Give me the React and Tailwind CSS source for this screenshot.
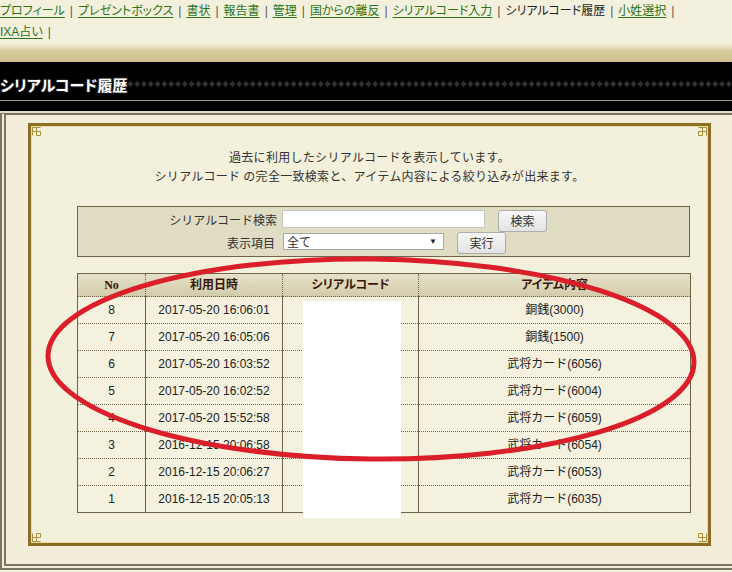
import React from "react";

const navItems = [
  { t: "プロフィール", link: true },
  { t: "プレゼントボックス", link: true },
  { t: "書状", link: true },
  { t: "報告書", link: true },
  { t: "管理", link: true },
  { t: "国からの離反", link: true },
  { t: "シリアルコード入力", link: true },
  { t: "シリアルコード履歴", link: false },
  { t: "小姓選択", link: true },
  { t: "IXA占い", link: true },
];

const rows = [
  ["8", "2017-05-20 16:06:01", "銅銭(3000)"],
  ["7", "2017-05-20 16:05:06", "銅銭(1500)"],
  ["6", "2017-05-20 16:03:52", "武将カード(6056)"],
  ["5", "2017-05-20 16:02:52", "武将カード(6004)"],
  ["4", "2017-05-20 15:52:58", "武将カード(6059)"],
  ["3", "2016-12-15 20:06:58", "武将カード(6054)"],
  ["2", "2016-12-15 20:06:27", "武将カード(6053)"],
  ["1", "2016-12-15 20:05:13", "武将カード(6035)"],
];

function Corner({ className }) {
  return (
    <svg width="9" height="9" viewBox="0 0 9 9" className={className}>
      <path d="M0.5 0.5H4.5V4.5H0.5Z M4.5 4.5H8.5V8.5H4.5Z M0.5 4.5V8.5 M4.5 0.5H8.5" fill="none" stroke="#a98f3a" strokeWidth="1" />
    </svg>
  );
}

function Diamonds() {
  return (
    <svg className="flex-1 h-[8px]" height="8">
      <defs>
        <pattern id="dm" width="6.8" height="8" patternUnits="userSpaceOnUse">
          <polygon points="3.4,0.6 6.4,4 3.4,7.4 0.4,4" fill="#2a2a2a" />
          <polygon points="3.4,2.4 4.9,4 3.4,5.6 1.9,4" fill="#3c3c3c" />
        </pattern>
      </defs>
      <rect width="100%" height="8" fill="url(#dm)" />
    </svg>
  );
}

const cellCls = "text-center border-l border-[#6e6446] border-b border-b-[#6e6446]";

export default function App() {
  return (
    <div className="relative w-[732px] h-[572px] overflow-hidden bg-[#f3f0dd] font-['Liberation_Sans','Noto_Sans_CJK_JP',sans-serif] text-[12px] text-[#222]">
      {/* nav */}
      <div className="w-[690px] h-[44px] pt-[1px] leading-[21px] text-[12px] [font-feature-settings:'palt']">
        {navItems.map((n, i) => (
          <span key={i} className="inline-block whitespace-nowrap">
            {n.link ? (
              <span className="text-[#2b7419] underline underline-offset-2">{n.t}</span>
            ) : (
              <span className="text-[#222]">{n.t}</span>
            )}
            <span className="text-[#555] mx-[5px]">|</span>
          </span>
        ))}
      </div>

      {/* header band */}
      <div className="h-[6px] bg-gradient-to-b from-[#f0ecd6] to-[#dcd0a6]" />
      <div className="h-[12px] bg-gradient-to-b from-[#d8cc9e] to-[#cdbf8d]" />
      <div className="h-[38px] bg-black flex items-center pt-[6px]">
        <span className="text-white font-bold text-[15px] leading-none whitespace-nowrap [font-feature-settings:'palt'] font-['Noto_Sans_CJK_JP',sans-serif] [text-shadow:0_0_2px_#666]">
          シリアルコード履歴
        </span>
        <Diamonds />
      </div>
      <div className="h-px bg-[#a39b7c]" />
      <div className="h-[10px] bg-black" />
      <div className="h-[2px] bg-[#e2ddc8]" />

      {/* outer frame */}
      <div className="w-[738px] h-[457px] border-x-[6px] border-b-[6px] border-t-2 border-double border-[#7a7660] bg-[#f2eed9] pl-[22px] pt-[8px]">
        <div className="relative w-[683px] h-[423px] border-[3px] border-[#8c6f22] bg-[#f3f0dc] shadow-[inset_0_0_0_1px_#e8dca6]">
          <Corner className="absolute left-[1px] top-[1px]" />
          <Corner className="absolute right-[1px] top-[1px] -scale-x-100" />
          <Corner className="absolute left-[1px] bottom-[1px] -scale-y-100" />
          <Corner className="absolute right-[1px] bottom-[1px] -scale-100" />

          <div className="pt-[21px] text-center text-[12px] leading-[19px] text-[#333] tracking-[0.3px] font-['Noto_Sans_CJK_JP',sans-serif]">
            <p>過去に利用したシリアルコードを表示しています。</p>
            <p>シリアルコード の完全一致検索と、アイテム内容による絞り込みが出来ます。</p>
          </div>

          {/* search form */}
          <div className="ml-[46px] mt-[21px] w-[613px] h-[51px] border border-[#6e6446] bg-[#e1ddc5] pt-[3px] text-[12px] text-[#333]">
            <div className="flex items-start h-[22px]">
              <div className="w-[199px] text-right leading-[20px] font-['Noto_Sans_CJK_JP',sans-serif]">シリアルコード検索</div>
              <div className="ml-[5px] w-[203px] h-[18px] bg-white border border-[#c4c4c4]" />
              <button className="ml-[13px] w-[49px] h-[22px] rounded-[3px] border border-[#adadad] bg-gradient-to-b from-[#f7f7f7] to-[#e3e3e3] text-[12px] text-[#333] font-['Noto_Sans_CJK_JP',sans-serif]">
                検索
              </button>
            </div>
            <div className="flex items-start h-[22px]">
              <div className="w-[197px] text-right leading-[22px] font-['Noto_Sans_CJK_JP',sans-serif]">表示項目</div>
              <div className="ml-[8px] mt-[1px] w-[161px] h-[17px] bg-white border border-[#a9a9a9] flex items-center justify-between pl-[3px] pr-[6px] leading-none">
                <span className="font-['Noto_Sans_CJK_JP',sans-serif] text-[12px]">全て</span>
                <span className="text-[8px] text-[#222]">▼</span>
              </div>
              <button className="ml-[13px] w-[49px] h-[22px] rounded-[3px] border border-[#adadad] bg-gradient-to-b from-[#f7f7f7] to-[#e3e3e3] text-[12px] text-[#333] font-['Noto_Sans_CJK_JP',sans-serif]">
                実行
              </button>
            </div>
          </div>

          {/* table */}
          <table className="ml-[46px] mt-[16px] w-[613px] border-collapse border border-[#6e6446] table-fixed text-[12px]">
            <colgroup>
              <col className="w-[68px]" />
              <col className="w-[137px]" />
              <col className="w-[136px]" />
              <col className="w-[272px]" />
            </colgroup>
            <thead>
              <tr className="h-[23px] bg-gradient-to-b from-[#e6e1c9] to-[#d2caa9]">
                {["No", "利用日時", "シリアルコード", "アイテム内容"].map((h) => (
                  <th
                    key={h}
                    className="border-x border-[#6e6446] border-b border-b-[#6e6446] border-dotted font-bold text-[#3a1607] text-center font-['Liberation_Serif','Noto_Sans_CJK_JP',serif] [font-feature-settings:'palt']"
                  >
                    {h}
                  </th>
                ))}
              </tr>
            </thead>
            <tbody className="bg-[#f4f1df]">
              {rows.map((r) => (
                <tr key={r[0]} className="h-[27px]">
                  <td className={cellCls} style={{ borderBottomStyle: "dotted" }}>{r[0]}</td>
                  <td className={cellCls} style={{ borderBottomStyle: "dotted" }}>{r[1]}</td>
                  <td className={cellCls} style={{ borderBottomStyle: "dotted" }}></td>
                  <td className={cellCls} style={{ borderBottomStyle: "dotted" }}>{r[2]}</td>
                </tr>
              ))}
            </tbody>
          </table>
        </div>
      </div>

      {/* redaction */}
      <div className="absolute left-[303px] top-[301px] w-[98px] h-[217px] bg-white" />

      {/* red annotation ellipse */}
      <svg className="absolute left-0 top-0 pointer-events-none" width="732" height="572" viewBox="0 0 732 572">
        <ellipse cx="371" cy="359" rx="323" ry="100" fill="none" stroke="#db1f2a" strokeWidth="5" transform="rotate(0.6 371 359)" />
      </svg>
    </div>
  );
}
